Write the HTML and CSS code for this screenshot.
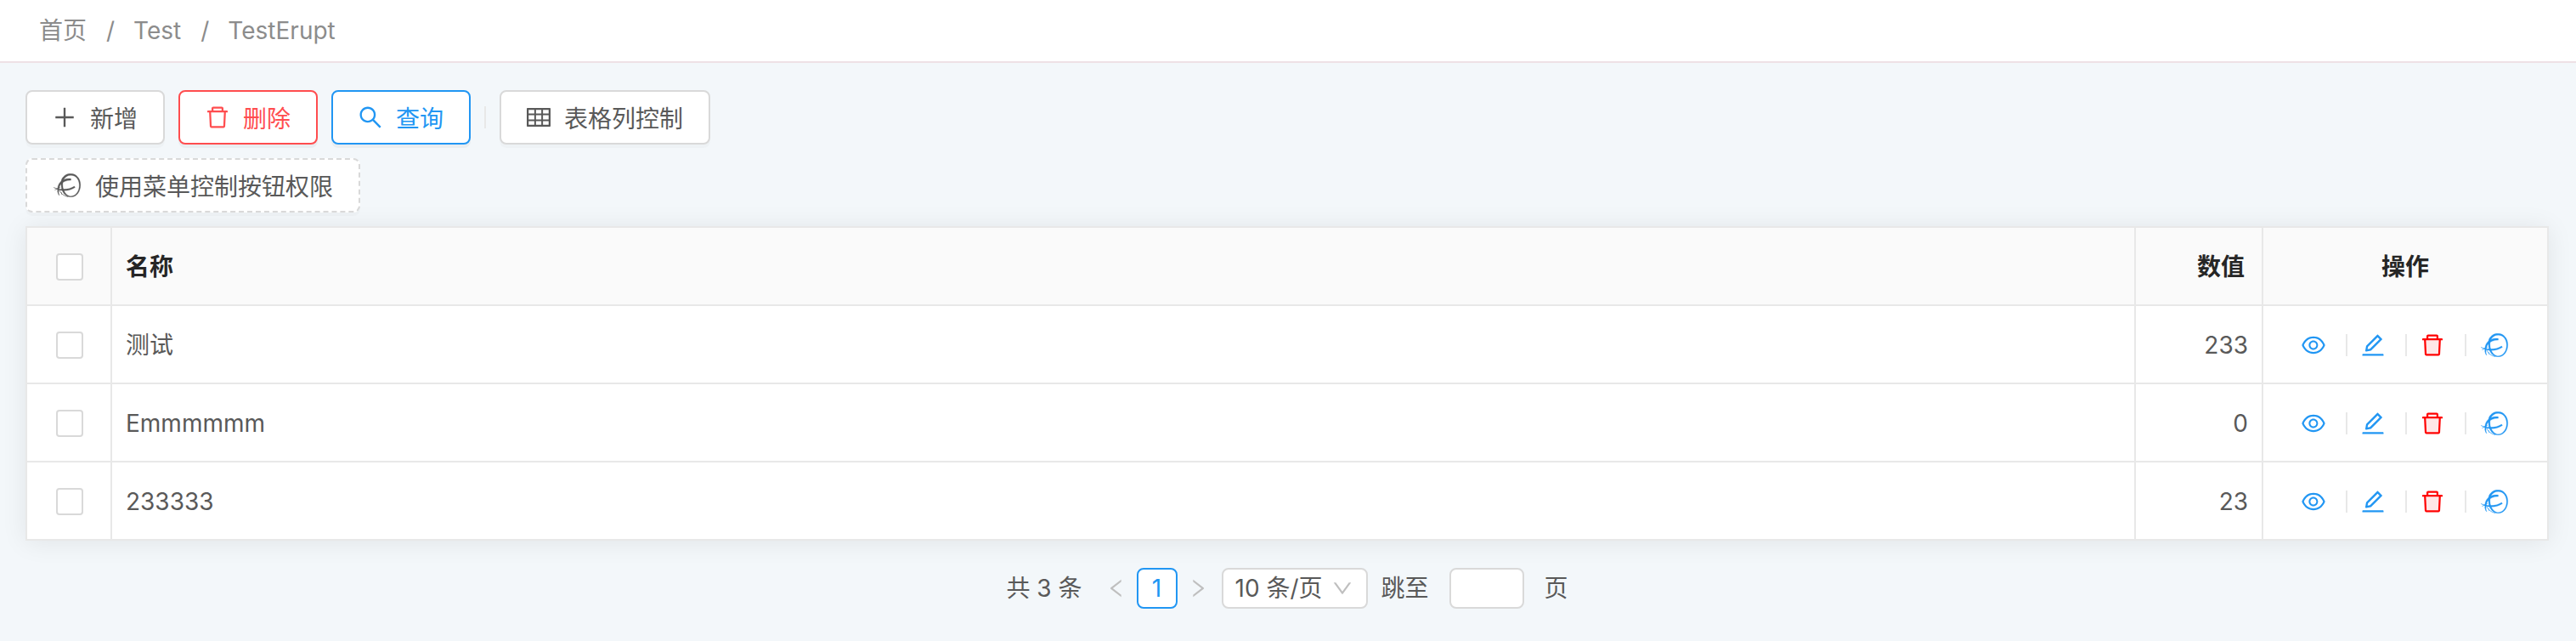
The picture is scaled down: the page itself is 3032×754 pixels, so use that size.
FILE: index.html
```html
<!DOCTYPE html>
<html lang="zh-CN">
<head>
<meta charset="utf-8">
<meta name="viewport" content="width=device-width">
<title>TestErupt</title>
<link rel="stylesheet" href="styles.css">
</head>
<body>
<svg class="sprite" aria-hidden="true">
  <symbol id="i-plus" viewBox="64 64 896 896"><path d="M482 152h60q8 0 8 8v704q0 8-8 8h-60q-8 0-8-8V160q0-8 8-8z"/><path d="M176 474h672q8 0 8 8v60q0 8-8 8H176q-8 0-8-8v-60q0-8 8-8z"/></symbol>
  <symbol id="i-delete" viewBox="64 64 896 896"><path d="M360 184h-8c4.400 0 8-3.600 8-8v8h304v-8c0 4.400 3.600 8 8 8h-8v72h72v-80c0-35.300-28.700-64-64-64H352c-35.300 0-64 28.700-64 64v80h72v-72zm504 72H160c-17.700 0-32 14.300-32 32v32c0 4.400 3.600 8 8 8h60.400l24.700 523c1.600 34.100 29.800 61 63.900 61h454c34.200 0 62.300-26.800 63.900-61l24.700-523H888c4.400 0 8-3.600 8-8v-32c0-17.700-14.300-32-32-32zM731.300 840H292.700l-24.200-512h487l-24.200 512z"/></symbol>
  <symbol id="i-delete-tone" viewBox="64 64 896 896"><path fill="#ffe6e6" d="M292.700 840h438.600l24.200-512h-487z"/><use href="#i-delete" x="64" y="64" width="896" height="896"/></symbol>
  <symbol id="i-search" viewBox="64 64 896 896"><path d="M909.600 854.500L649.900 594.800C690.200 542.700 712 479 712 412c0-80.200-31.300-155.400-87.900-212.100-56.600-56.700-132-87.900-212.100-87.900s-155.500 31.300-212.100 87.900C143.200 256.500 112 331.800 112 412c0 80.100 31.300 155.500 87.900 212.100C256.500 680.800 331.800 712 412 712c67 0 130.600-21.800 182.700-62l259.700 259.600a8.200 8.200 0 0 0 11.600 0l43.600-43.500a8.200 8.200 0 0 0 0-11.600zM570.400 570.400C528 612.700 471.800 636 412 636s-116-23.300-158.400-65.600C211.300 528 188 471.800 188 412s23.300-116.100 65.600-158.400C296 211.300 352.200 188 412 188s116.100 23.200 158.400 65.600S636 352.200 636 412s-23.300 116.100-65.600 158.400z"/></symbol>
  <symbol id="i-table" viewBox="64 64 896 896"><path d="M928 160H96c-17.700 0-32 14.300-32 32v640c0 17.700 14.300 32 32 32h832c17.700 0 32-14.300 32-32V192c0-17.700-14.300-32-32-32zm-40 208H676V232h212v136zm0 224H676V432h212v160zM412 432h200v160H412V432zm200-64H412V232h200v136zm-476 64h212v160H136V432zm0-200h212v136H136V232zm0 424h212v136H136V656zm276 0h200v136H412V656zm476 136H676V656h212v136z"/></symbol>
  <symbol id="i-eye" viewBox="64 64 896 896"><path d="M942.200 486.200C847.400 286.500 704.100 186 512 186c-192.200 0-335.400 100.500-430.200 300.300a60.300 60.300 0 0 0 0 51.500C176.600 737.500 319.900 838 512 838c192.200 0 335.400-100.500 430.200-300.300 7.700-16.200 7.700-35 0-51.500zM512 766c-161.300 0-279.400-81.800-362.700-254C232.600 339.800 350.700 258 512 258c161.300 0 279.400 81.800 362.700 254C791.500 684.200 673.400 766 512 766zm-4-430c-97.200 0-176 78.800-176 176s78.800 176 176 176 176-78.800 176-176-78.800-176-176-176zm0 288c-61.900 0-112-50.100-112-112s50.100-112 112-112 112 50.100 112 112-50.100 112-112 112z"/></symbol>
  <symbol id="i-edit" viewBox="64 64 896 896"><path d="M257.700 752c2 0 4-.2 6-.5L431.900 722c2-.4 3.900-1.300 5.300-2.800l423.900-423.900a9.960 9.960 0 0 0 0-14.100L694.900 114.900c-1.900-1.900-4.400-2.900-7.100-2.900s-5.200 1-7.100 2.900L256.800 538.800c-1.500 1.500-2.400 3.300-2.800 5.300l-29.500 168.200a33.500 33.500 0 0 0 9.400 29.800c6.600 6.400 14.900 9.900 23.800 9.900zm67.400-174.400L687.800 215l73.300 73.300-362.700 362.600-88.900 15.700 15.600-89zM880 836H144c-17.700 0-32 14.300-32 32v36c0 4.400 3.600 8 8 8h784c4.400 0 8-3.600 8-8v-36c0-17.700-14.300-32-32-32z"/></symbol>
  <symbol id="i-left" viewBox="64 64 896 896"><path d="M724 218.300V141c0-6.700-7.700-10.400-12.900-6.300L260.300 486.800a31.860 31.860 0 0 0 0 50.300l450.800 352.100c5.300 4.100 12.900.4 12.900-6.300v-77.300c0-4.900-2.300-9.600-6.100-12.600l-360-281 360-281.100c3.800-3 6.100-7.700 6.100-12.600z"/></symbol>
  <symbol id="i-right" viewBox="64 64 896 896"><path transform="matrix(-1 0 0 1 1024 0)" d="M724 218.300V141c0-6.700-7.700-10.400-12.900-6.300L260.300 486.800a31.860 31.860 0 0 0 0 50.300l450.800 352.100c5.300 4.100 12.900.4 12.900-6.300v-77.300c0-4.900-2.300-9.600-6.100-12.600l-360-281 360-281.100c3.800-3 6.100-7.700 6.100-12.600z"/></symbol>
  <symbol id="i-down" viewBox="64 64 896 896"><path d="M884 256h-75c-5.100 0-9.900 2.500-12.900 6.600L512 654.200 227.900 262.600c-3-4.100-7.800-6.600-12.900-6.600h-75c-6.500 0-10.300 7.400-6.500 12.700l352.600 486.100c12.800 17.600 39 17.600 51.700 0l352.600-486.100c3.900-5.300.1-12.700-6.400-12.700z"/></symbol>
  <symbol id="i-erupt" viewBox="-1 0 34 28">
    <g stroke="currentColor" stroke-width=".3">
    <path fill-rule="evenodd" d="M9.500 7C12 2 16 .2 20.500 .2 27 .4 31.800 6 31.800 13.500 31.800 21.500 27 27.800 20.500 27.800 13.500 27.800 9 21 9 13.500 9 11 9 9 9.500 7zM11.500 8C10.500 11 10.500 16 12 19.500 14 24.500 17.500 27 21 26.800 26.500 26.300 30.500 20.500 30.300 13.500 30 6.500 26 2.300 20.500 2.200 16.500 2.200 13.500 4 11.500 8z"/>
    <path d="M20.500 6.200c-6-.6-11 1.300-13.800 5.500C4.300 15.500 4.100 20 6.200 25c-.4-5.500 0-9.300 2.500-12.200C11.200 9.600 15 8.200 20.500 8.100z"/>
    <path d="M0 16.400c3.500 1.300 7.500 2.200 11.500 2.200 5 0 9.500-1.200 13-3.600l.9 1.500C21.500 19 17 20.500 12 20.300 7.500 20 3.500 18.500 0 16.400z"/>
    </g>
    <path fill="none" stroke="currentColor" stroke-width=".7" d="M1.500 19.500 8 16M5 20c0 2.500.5 4 2 6M7 20c1.500 3.500 5 6.500 10 7.500M9 22l1 3"/>
  </symbol>
</svg>

<header class="topbar">
  <nav aria-label="breadcrumb">
    <ol class="crumbs">
      <li><a href="#">首页</a></li>
      <li><a href="#">Test</a></li>
      <li><a href="#">TestErupt</a></li>
    </ol>
  </nav>
</header>

<main class="page">
  <div class="toolbar">
    <div class="toolbar-row">
      <button class="btn" type="button"><svg class="icon"><use href="#i-plus"/></svg>新增</button>
      <button class="btn btn-danger" type="button"><svg class="icon"><use href="#i-delete"/></svg>删除</button>
      <button class="btn btn-primary" type="button"><svg class="icon"><use href="#i-search"/></svg>查询</button>
      <span class="divider"></span>
      <button class="btn" type="button"><svg class="icon"><use href="#i-table"/></svg>表格列控制</button>
    </div>
    <div class="toolbar-row">
      <button class="btn btn-dashed" type="button"><svg class="icon icon-wide"><use href="#i-erupt"/></svg>使用菜单控制按钮权限</button>
    </div>
  </div>

  <table class="grid">
    <colgroup><col class="col-check"><col><col class="col-num"><col class="col-ops"></colgroup>
    <thead>
      <tr>
        <th class="check"><input type="checkbox" aria-label="全选"></th>
        <th>名称</th>
        <th class="num">数值</th>
        <th class="center">操作</th>
      </tr>
    </thead>
    <tbody>
      <tr>
        <td class="check"><input type="checkbox" aria-label="选择 测试"></td>
        <td>测试</td>
        <td class="num">233</td>
        <td><div class="ops">
          <button type="button" aria-label="查看"><svg class="icon"><use href="#i-eye"/></svg></button><span class="divider"></span>
          <button type="button" aria-label="编辑"><svg class="icon"><use href="#i-edit"/></svg></button><span class="divider"></span>
          <button class="op-delete" type="button" aria-label="删除"><svg class="icon"><use href="#i-delete-tone"/></svg></button><span class="divider"></span>
          <button type="button" aria-label="权限"><svg class="icon icon-wide"><use href="#i-erupt"/></svg></button>
        </div></td>
      </tr>
      <tr>
        <td class="check"><input type="checkbox" aria-label="选择 Emmmmmm"></td>
        <td>Emmmmmm</td>
        <td class="num">0</td>
        <td><div class="ops">
          <button type="button" aria-label="查看"><svg class="icon"><use href="#i-eye"/></svg></button><span class="divider"></span>
          <button type="button" aria-label="编辑"><svg class="icon"><use href="#i-edit"/></svg></button><span class="divider"></span>
          <button class="op-delete" type="button" aria-label="删除"><svg class="icon"><use href="#i-delete-tone"/></svg></button><span class="divider"></span>
          <button type="button" aria-label="权限"><svg class="icon icon-wide"><use href="#i-erupt"/></svg></button>
        </div></td>
      </tr>
      <tr>
        <td class="check"><input type="checkbox" aria-label="选择 233333"></td>
        <td>233333</td>
        <td class="num">23</td>
        <td><div class="ops">
          <button type="button" aria-label="查看"><svg class="icon"><use href="#i-eye"/></svg></button><span class="divider"></span>
          <button type="button" aria-label="编辑"><svg class="icon"><use href="#i-edit"/></svg></button><span class="divider"></span>
          <button class="op-delete" type="button" aria-label="删除"><svg class="icon"><use href="#i-delete-tone"/></svg></button><span class="divider"></span>
          <button type="button" aria-label="权限"><svg class="icon icon-wide"><use href="#i-erupt"/></svg></button>
        </div></td>
      </tr>
    </tbody>
  </table>

  <nav class="pager" aria-label="pagination">
    <span class="total">共 3 条</span>
    <button class="step" type="button" aria-label="上一页" disabled><svg class="icon"><use href="#i-left"/></svg></button>
    <button class="current" type="button" aria-current="page">1</button>
    <button class="step" type="button" aria-label="下一页" disabled><svg class="icon"><use href="#i-right"/></svg></button>
    <span class="size">
      <select aria-label="每页条数"><option>10 条/页</option><option>20 条/页</option></select>
      <svg class="icon"><use href="#i-down"/></svg>
    </span>
    <label class="jump" for="jump">跳至</label>
    <input class="jump-input" id="jump" type="text">
    <span>页</span>
  </nav>
</main>
</body>
</html>
```

FILE: styles.css
```css
:root {
  --text: #595959;
  --blue: #2196f3;
  --red: #ff4d4f;
  --line: #e8e8e8;
  --control: #d9d9d9;
}

* { box-sizing: border-box; }

body {
  margin: 0;
  background: #f3f7fa;
  color: var(--text);
  font: 28px/42px Inter, "Noto Sans CJK SC", sans-serif;
}

button, input, select { margin: 0; font: inherit; color: inherit; }
button { cursor: pointer; }

.sprite { position: absolute; width: 0; height: 0; }
.icon { display: block; flex: none; width: 28px; height: 28px; fill: currentColor; }
.icon-wide { width: 34px; }

.topbar {
  padding: 15px 46px;
  background: #fff;
  border-bottom: 2px solid #eee1e5;
}
.crumbs { display: flex; margin: 0; padding: 0; list-style: none; color: #8c8c8c; }
.crumbs a { color: inherit; text-decoration: none; }
.crumbs li + li::before { content: "/"; margin: 0 22px 0 23px; }

.page { padding: 32px 32px 36px 30px; }

.toolbar { display: grid; gap: 16px; margin-bottom: 16px; }
.toolbar-row { display: flex; align-items: center; gap: 16px; }

.btn {
  display: flex;
  align-items: center;
  gap: 16px;
  height: 64px;
  padding: 3px 30px 0;
  background: #fff;
  border: 2px solid var(--control);
  border-radius: 8px;
  box-shadow: 0 4px 0 rgba(0, 0, 0, 0.02);
  white-space: nowrap;
}
.btn .icon { margin-bottom: 3px; }
.btn-primary { color: var(--blue); border-color: var(--blue); box-shadow: 0 4px 0 rgba(0, 0, 0, 0.04); }
.btn-danger { color: var(--red); border-color: var(--red); box-shadow: 0 4px 0 rgba(0, 0, 0, 0.04); }
.btn-dashed { border-style: dashed; }

.divider { flex: none; width: 2px; height: 26px; background: var(--line); }

.grid {
  width: 100%;
  table-layout: fixed;
  border-spacing: 0;
  background: #fff;
  border: solid var(--line);
  border-width: 2px 0 0 2px;
  box-shadow: 0 2px 28px rgba(0, 0, 0, 0.08);
}
.col-check { width: 100px; }
.col-num { width: 150px; }
.col-ops { width: 336px; }
.grid th, .grid td {
  height: 92px;
  padding: 2px 16px 0;
  border: solid var(--line);
  border-width: 0 2px 2px 0;
  text-align: left;
  font-weight: 400;
}
.grid th { background: #fafafa; color: #262626; font-weight: 700; }
.grid th.center { text-align: center; }
.grid .check { padding: 2px 0 0 2px; }
.grid .num { text-align: right; }
.grid th.num { padding-right: 20px; }

.check input {
  display: block;
  appearance: none;
  width: 32px;
  height: 32px;
  margin: 0 auto;
  background: #fff;
  border: 2px solid var(--control);
  border-radius: 4px;
}

.ops { display: flex; align-items: center; justify-content: center; gap: 16px; color: var(--blue); }
.ops button { padding: 0; border: 0; background: none; }
.ops .divider { margin-left: 8px; }
.ops .op-delete { color: #f00; }

.pager {
  display: flex;
  align-items: center;
  justify-content: center;
  margin-top: 32px;
  line-height: 44px;
}
.total { margin-right: 16px; }
.step {
  display: grid;
  place-items: center;
  width: 48px;
  height: 48px;
  padding: 0;
  border: 0;
  background: none;
  color: #bfbfbf;
}
.step .icon { width: 24px; height: 24px; }
.current {
  width: 48px;
  height: 48px;
  padding: 0;
  background: #fff;
  border: 2px solid var(--blue);
  border-radius: 8px;
  color: var(--blue);
}
.size { display: grid; align-items: center; margin: 0 16px 0 4px; }
.size select, .size .icon { grid-area: 1 / 1; }
.size select {
  appearance: none;
  width: 172px;
  height: 48px;
  padding: 0 14px;
  background: #fff;
  border: 2px solid var(--control);
  border-radius: 8px;
}
.size .icon { justify-self: end; width: 24px; height: 24px; margin-right: 18px; color: #bfbfbf; pointer-events: none; }
.jump-input {
  width: 88px;
  height: 48px;
  margin: 0 24px;
  padding: 0 12px;
  background: #fff;
  border: 2px solid var(--control);
  border-radius: 8px;
}
```
